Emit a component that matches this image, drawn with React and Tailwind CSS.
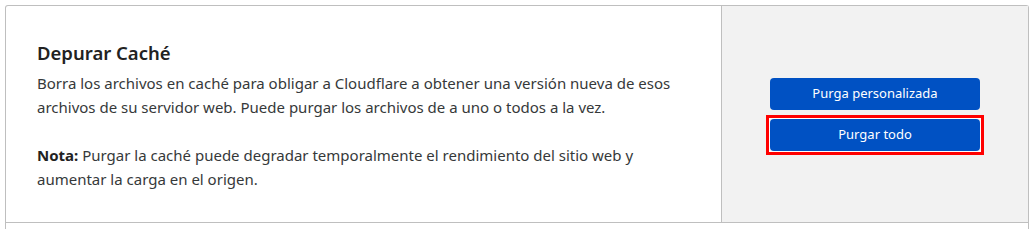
const font = { fontFamily: '"Noto Sans", "Open Sans", sans-serif' };

export default function App() {
  return (
    <div className="bg-white pt-[5px] pl-[5px] pr-[4px]" style={font}>
      <div className="border border-b-0 border-[#bfbfbf] rounded-t-[3px]">
        {/* Purge cache row */}
        <div className="flex border-b border-[#bfbfbf]">
          <div className="w-[715px] pl-[31px] pr-[31px] pt-[34px] pb-[31px] text-[#313131]">
            <h3 className="text-[18.5px] leading-[26px] font-semibold text-[#222]">Depurar Caché</h3>
            <p className="mt-[5px] text-[15px] leading-[24px] text-[#36393a]">
              Borra los archivos en caché para obligar a Cloudflare a obtener una versión nueva de esos
              <br />
              archivos de su servidor web. Puede purgar los archivos de a uno o todos a la vez.
            </p>
            <p className="mt-[24px] text-[15px] leading-[24px] text-[#36393a]">
              <strong className="font-bold text-[#222]">Nota:</strong> Purgar la caché puede degradar temporalmente el rendimiento del sitio web y
              <br />
              aumentar la carga en el origen.
            </p>
          </div>
          <div className="flex-1 bg-[#f2f2f2] border-l border-[#bfbfbf] flex flex-col items-center justify-center gap-[9px]">
            <button className="w-[210px] h-[32px] rounded-[4px] bg-[#0051c3] text-white text-[13px]">
              Purga personalizada
            </button>
            <button className="relative w-[210px] h-[32px] rounded-[4px] bg-[#0051c3] text-white text-[13px]">
              Purgar todo
              {/* highlight frame */}
              <span className="pointer-events-none absolute -inset-[4px] border-[3px] border-[#ff0000] shadow-[inset_0_0_0_1px_#ffffff]" />
            </button>
          </div>
        </div>
        <div className="h-[6px]" />
      </div>
    </div>
  );
}
